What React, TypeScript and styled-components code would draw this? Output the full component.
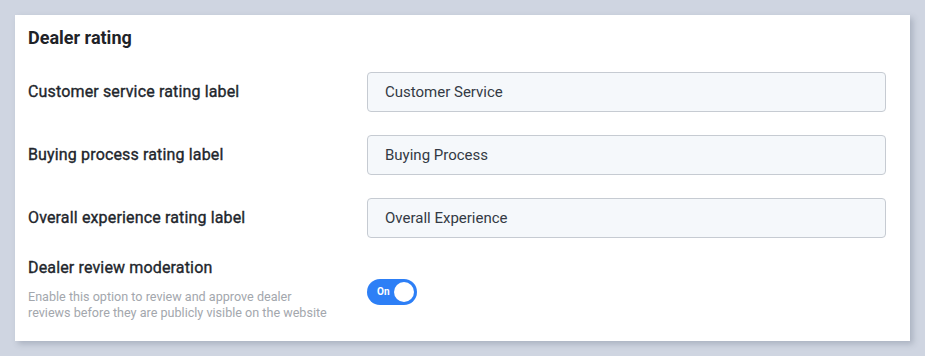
import { useState } from 'react';
import { styled, createGlobalStyle } from 'styled-components';

const GlobalStyle = createGlobalStyle`
  html, body {
    margin: 0;
    padding: 0;
    background: #cfd5e1;
    font-family: Roboto, "Noto Sans", Arial, sans-serif;
  }
`;

const fields = [
  { label: 'Customer service rating label', value: 'Customer Service' },
  { label: 'Buying process rating label', value: 'Buying Process' },
  { label: 'Overall experience rating label', value: 'Overall Experience' },
];

const App = () => {
  const [moderation, setModeration] = useState(true);

  return (
    <>
      <GlobalStyle />
      <Page>
        <Card>
          <Title>Dealer rating</Title>
          <Rows>
            {fields.map((f) => (
              <Row key={f.label}>
                <Label>{f.label}</Label>
                <Input defaultValue={f.value} />
              </Row>
            ))}
          </Rows>
          <ModerationRow>
            <div>
              <Label>Dealer review moderation</Label>
              <Hint>
                Enable this option to review and approve dealer reviews before they are publicly
                visible on the website
              </Hint>
            </div>
            <Toggle $on={moderation} onClick={() => setModeration(!moderation)}>
              <span className="text">{moderation ? 'On' : 'Off'}</span>
              <span className="knob" />
            </Toggle>
          </ModerationRow>
        </Card>
      </Page>
    </>
  );
};

export default App;

const Page = styled.div`
  padding: 15px;
`;

const Card = styled.div`
  box-sizing: border-box;
  width: 895px;
  height: 326px;
  background: #ffffff;
  box-shadow: 3px 3px 6px rgba(60, 70, 90, 0.25);
  padding: 11px 24px 0 13px;
`;

const Title = styled.h2`
  margin: 0;
  font-family: Roboto, sans-serif;
  font-size: 18px;
  line-height: 24px;
  font-weight: 700;
  color: #1f2328;
`;

const Rows = styled.div`
  display: flex;
  flex-direction: column;
  gap: 23px;
  margin-top: 22px;
`;

const Row = styled.div`
  display: grid;
  grid-template-columns: 339px 1fr;
  align-items: center;
`;

// no Roboto Medium installed: regular weight with a thin stroke reads as 500
const Label = styled.div`
  font-family: Roboto, sans-serif;
  font-size: 16px;
  line-height: 20px;
  font-weight: 400;
  letter-spacing: 0.15px;
  -webkit-text-stroke: 0.35px #22262c;
  color: #22262c;
`;

const Input = styled.input`
  box-sizing: border-box;
  height: 40px;
  width: 100%;
  border: 1px solid #c6cbd2;
  border-radius: 4px;
  background: #f5f8fb;
  padding: 0 17px;
  font-family: Roboto, "Noto Sans", Arial, sans-serif;
  font-size: 15px;
  color: #333a44;
  outline: none;
`;

const ModerationRow = styled.div`
  display: grid;
  grid-template-columns: 339px 1fr;
  align-items: center;
  margin-top: 20px;
`;

const Hint = styled.p`
  margin: 11px 0 0;
  width: 306px;
  font-size: 12.6px;
  line-height: 16px;
  color: #a3a7ad;
`;

const Toggle = styled.button<{ $on: boolean }>`
  box-sizing: border-box;
  position: relative;
  width: 50px;
  height: 26px;
  margin-top: 4px;
  border: none;
  border-radius: 13px;
  padding: 0;
  cursor: pointer;
  background: ${(p) => (p.$on ? '#2d7ff6' : '#c3c8cf')};

  .text {
    position: absolute;
    top: 0;
    left: ${(p) => (p.$on ? '10px' : '27px')};
    line-height: 26px;
    font-family: Roboto, Arial, sans-serif;
    font-size: 10px;
    font-weight: 700;
    color: #ffffff;
  }

  .knob {
    position: absolute;
    top: 3px;
    left: ${(p) => (p.$on ? '27px' : '3px')};
    width: 20px;
    height: 20px;
    border-radius: 50%;
    background: #ffffff;
  }
`;
